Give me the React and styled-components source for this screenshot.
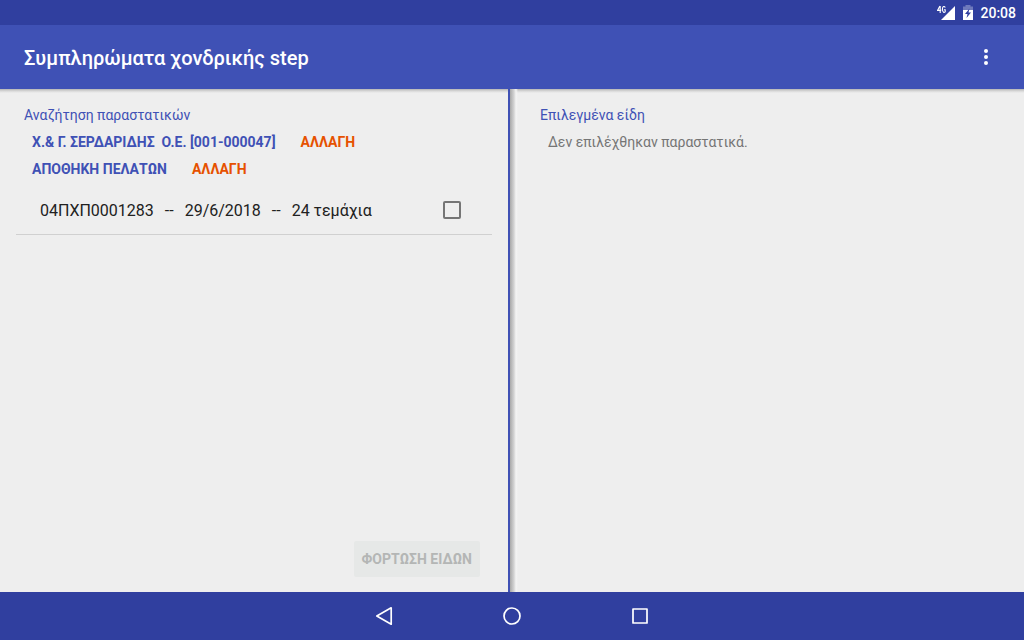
import React from "react";
import styled, { createGlobalStyle } from "styled-components";

const color = {
  dark: "#303f9f",
  primary: "#3f51b5",
  accent: "#e65100",
  surface: "#eeeeee",
};

const GlobalStyle = createGlobalStyle`
  *, *::before, *::after { box-sizing: border-box; }
  html, body, #root { height: 100%; }
  body {
    margin: 0;
    background: ${color.surface};
    color: #212121;
    font-family: Roboto, "Noto Sans", sans-serif;
    font-size: 14px;
    line-height: 20px;
  }
  h1, h2, p, ul { margin: 0; padding: 0; }
  button { font: inherit; border: 0; padding: 0; background: none; cursor: pointer; }
`;

const Screen = styled.div`
  display: flex;
  flex-direction: column;
  min-height: 100%;
`;

const StatusBar = styled.div`
  display: flex;
  align-items: center;
  justify-content: flex-end;
  height: 25px;
  padding: 0 8px;
  background: ${color.dark};
  color: #fff;

  svg { display: block; }
`;

const Clock = styled.time`
  margin-left: 6px;
  font-weight: 500;
`;

const BatteryIcon = styled.svg`
  margin-left: 7px;
`;

const AppBar = styled.header`
  display: flex;
  align-items: center;
  justify-content: space-between;
  height: 64px;
  padding: 0 18px 0 24px;
  background: ${color.primary};
  color: #fff;
`;

const Title = styled.h1`
  font-size: 20px;
  font-weight: 500;
  line-height: 24px;
  padding-top: 2px;
`;

const MenuButton = styled.button`
  display: grid;
  place-items: center;
  width: 40px;
  height: 40px;
`;

const Body = styled.main`
  flex: 1;
  display: grid;
  grid-template-columns: 1fr 1fr;
  background: linear-gradient(#b4b4b4, #d8d8d8 2px, ${color.surface} 4px);
`;

const Pane = styled.section`
  display: flex;
  flex-direction: column;
  padding: 16px 16px 15px;
`;

const SearchPane = styled(Pane)`
  margin-right: 2px;
  border-right: 2px solid ${color.primary};
`;

const SelectedPane = styled(Pane)`
  margin-left: -2px;
  padding-left: 22px;
  background: linear-gradient(90deg, #a8a8a8, #d4d4d4 4px, #f4f4f4 6px, transparent 8px);
`;

const Heading = styled.h2`
  padding: 0 8px;
  margin-bottom: 7px;
  color: ${color.primary};
  font-size: 14px;
  font-weight: 400;
`;

const FilterRow = styled.div`
  display: flex;
  gap: 25px;
  padding: 0 16px;
  margin-bottom: 7px;
`;

const FilterValue = styled.span`
  color: ${color.primary};
  font-weight: 700;
  white-space: pre;
`;

const ChangeButton = styled.button`
  color: ${color.accent};
  font-weight: 700;
`;

const DocumentList = styled.ul`
  list-style: none;
`;

const DocumentRow = styled.li`
  display: flex;
  align-items: center;
  justify-content: space-between;
  height: 49px;
  padding: 0 31px 0 24px;
  border-bottom: 1px solid #d0d0d0;
  font-size: 16px;
`;

const DocumentLabel = styled.label`
  display: flex;
  gap: 11px;
  padding-top: 2px;
`;

const Checkbox = styled.input`
  appearance: none;
  width: 18px;
  height: 18px;
  margin: 0;
  border: 2px solid #757575;
  border-radius: 2px;

  &:checked {
    border-color: ${color.primary};
    background: ${color.primary};
  }
`;

const Actions = styled.div`
  display: flex;
  justify-content: flex-end;
  margin-top: auto;
  padding: 0 12px;
`;

const LoadButton = styled.button`
  height: 36px;
  padding: 0 8px;
  border-radius: 2px;
  background: #e6e8e7;
  color: #b4b6b5;
  font-weight: 700;
`;

const EmptyText = styled.p`
  padding: 0 16px;
  color: #757575;
`;

const NavBar = styled.nav`
  display: flex;
  align-items: center;
  justify-content: center;
  gap: 80px;
  height: 48px;
  background: ${color.dark};
`;

const NavButton = styled.button`
  display: grid;
  place-items: center;
  width: 48px;
  height: 48px;
`;

export default function App() {
  return (
    <>
      <GlobalStyle />
      <Screen>
        <StatusBar>
          <svg width="18" height="16" viewBox="0 0 18 16" fill="#fff" aria-label="4G" role="img">
            <path d="M18 1v14H4z" />
            <path
              d="M2.900 1L.6 5.400h3.600M3.200 1v7M8.200 2.600C7.600 1 5.400 .9 5.400 4.300S7.600 7.900 8.200 6.700V4.700H6.900"
              fill="none"
              stroke="#303f9f"
              strokeWidth="2.600"
            />
            <path
              d="M2.900 1L.6 5.400h3.600M3.200 1v7M8.200 2.600C7.600 1 5.400 .9 5.400 4.300S7.600 7.900 8.200 6.700V4.700H6.900"
              fill="none"
              stroke="#fff"
              strokeWidth="1.100"
            />
          </svg>
          <BatteryIcon width="12" height="16" viewBox="0 0 12 16" aria-label="Μπαταρία" role="img">
            <path d="M1 1.500h2.500V0h5v1.500H11V5H1z" fill="#6f7abc" />
            <path d="M1 5h10v10H1z" fill="#fff" />
            <path d="M7.500 3.500L3 9h2.500L4.500 13 9 7.500H6.500z" fill="#303f9f" />
          </BatteryIcon>
          <Clock>20:08</Clock>
        </StatusBar>

        <AppBar>
          <Title>Συμπληρώματα χονδρικής step</Title>
          <MenuButton aria-label="Μενού">
            <svg width="24" height="24" viewBox="0 0 24 24" fill="#fff">
              <circle cx="12" cy="6" r="2" />
              <circle cx="12" cy="12" r="2" />
              <circle cx="12" cy="18" r="2" />
            </svg>
          </MenuButton>
        </AppBar>

        <Body>
          <SearchPane>
            <Heading>Αναζήτηση παραστατικών</Heading>
            <FilterRow>
              <FilterValue>{"Χ.& Γ. ΣΕΡΔΑΡΙΔΗΣ  Ο.Ε. [001-000047]"}</FilterValue>
              <ChangeButton>ΑΛΛΑΓΗ</ChangeButton>
            </FilterRow>
            <FilterRow>
              <FilterValue>ΑΠΟΘΗΚΗ ΠΕΛΑΤΩΝ</FilterValue>
              <ChangeButton>ΑΛΛΑΓΗ</ChangeButton>
            </FilterRow>
            <DocumentList>
              <DocumentRow>
                <DocumentLabel htmlFor="doc-1283">
                  <span>04ΠΧΠ0001283</span>
                  <span>--</span>
                  <span>29/6/2018</span>
                  <span>--</span>
                  <span>24 τεμάχια</span>
                </DocumentLabel>
                <Checkbox id="doc-1283" type="checkbox" />
              </DocumentRow>
            </DocumentList>
            <Actions>
              <LoadButton disabled>ΦΟΡΤΩΣΗ ΕΙΔΩΝ</LoadButton>
            </Actions>
          </SearchPane>

          <SelectedPane>
            <Heading>Επιλεγμένα είδη</Heading>
            <EmptyText>Δεν επιλέχθηκαν παραστατικά.</EmptyText>
          </SelectedPane>
        </Body>

        <NavBar>
          <NavButton aria-label="Πίσω">
            <svg width="24" height="24" viewBox="0 0 24 24" fill="none" stroke="#fff" strokeWidth="1.700" strokeLinejoin="round">
              <path d="M19.200 3.800v16.400L4.800 12z" />
            </svg>
          </NavButton>
          <NavButton aria-label="Αρχική">
            <svg width="24" height="24" viewBox="0 0 24 24" fill="none" stroke="#fff" strokeWidth="1.700">
              <circle cx="12" cy="12" r="8" />
            </svg>
          </NavButton>
          <NavButton aria-label="Επισκόπηση">
            <svg width="24" height="24" viewBox="0 0 24 24" fill="none" stroke="#fff" strokeWidth="1.700" strokeLinejoin="round">
              <rect x="5" y="5" width="14" height="14" />
            </svg>
          </NavButton>
        </NavBar>
      </Screen>
    </>
  );
}
